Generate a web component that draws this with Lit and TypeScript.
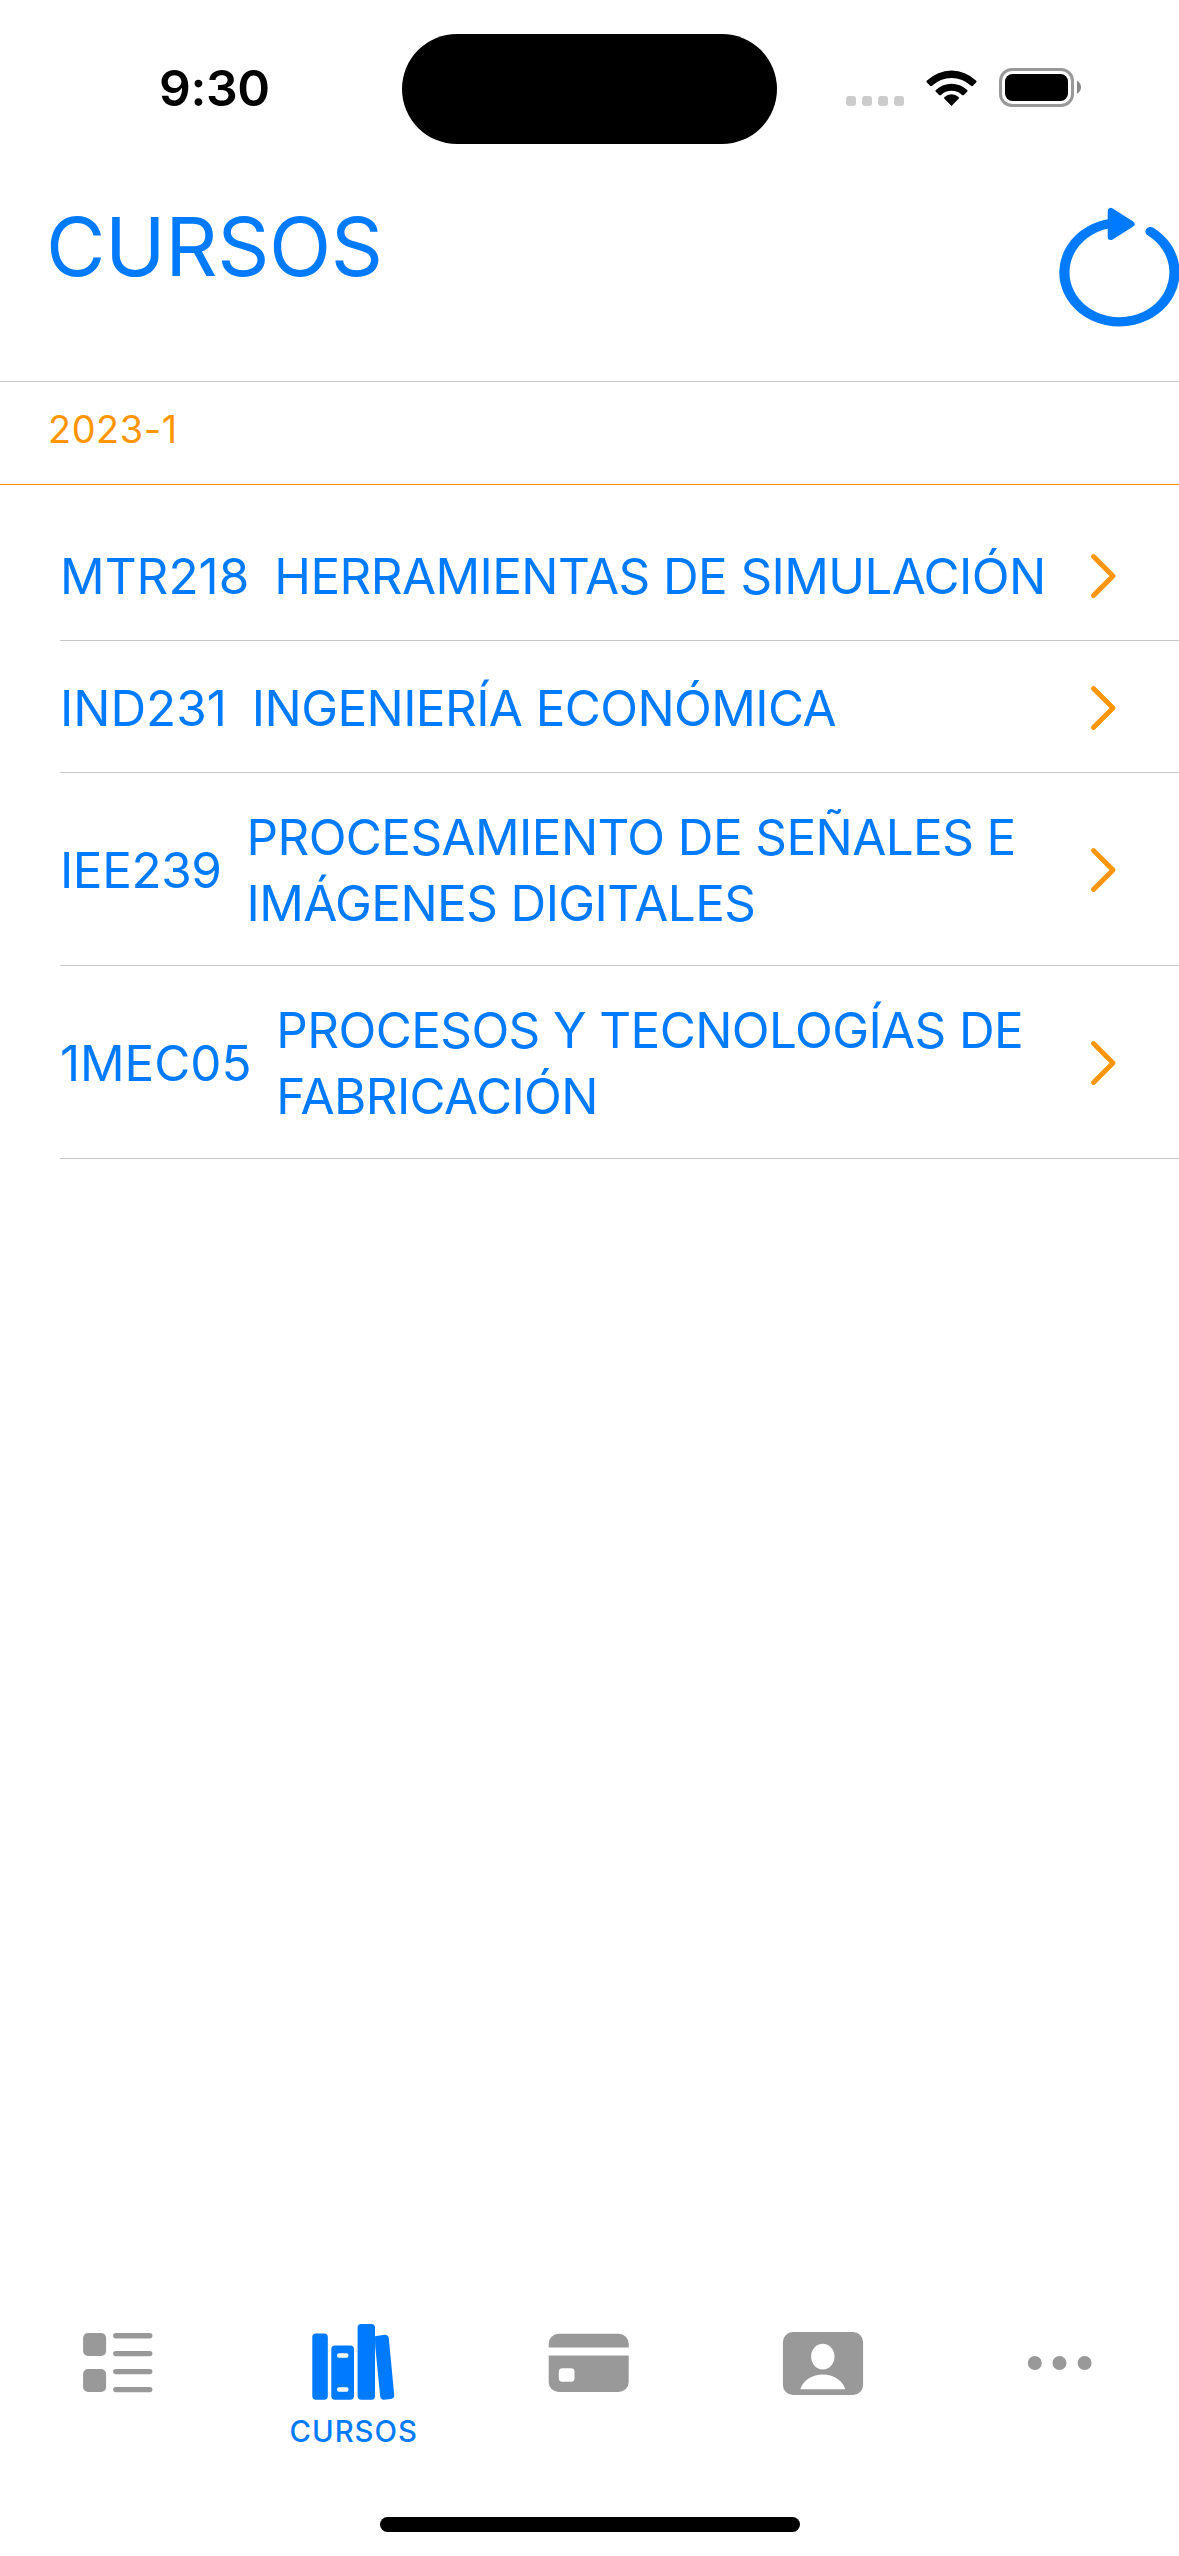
import { LitElement, html, svg, css } from "lit";
import { customElement, property } from "lit/decorators.js";

interface Course {
  code: string;
  name: string;
  /** Letter spacing of the code, in pixels. */
  tracking: number;
}

const COURSES: Course[] = [
  { code: "MTR218", name: "HERRAMIENTAS DE SIMULACIÓN", tracking: 0.05 },
  { code: "IND231", name: "INGENIERÍA ECONÓMICA", tracking: 0 },
  { code: "IEE239", name: "PROCESAMIENTO DE SEÑALES E IMÁGENES DIGITALES", tracking: -0.4 },
  { code: "1MEC05", name: "PROCESOS Y TECNOLOGÍAS DE FABRICACIÓN", tracking: -0.05 },
];

const TAB_ICONS = {
  list: svg`
    <rect x="13.1" y="17" width="23" height="23" rx="5"/>
    <rect x="13.1" y="53" width="23" height="23" rx="5"/>
    <rect x="43.1" y="17" width="39.3" height="5.4" rx="2.7"/>
    <rect x="43.1" y="35" width="39.3" height="5.2" rx="2.6"/>
    <rect x="43.1" y="53" width="39.3" height="5.2" rx="2.6"/>
    <rect x="43.1" y="71" width="39.3" height="5.2" rx="2.6"/>`,
  books: svg`
    <rect x="6.3" y="17.6" width="15.5" height="66.1" rx="3.6"/>
    <path fill-rule="evenodd" d="M29 29.6h15.3a3.7 3.7 0 0 1 3.7 3.7V80a3.7 3.7 0 0 1-3.7 3.7H29a3.7 3.7 0 0 1-3.7-3.7V33.3a3.7 3.7 0 0 1 3.7-3.7zM33.2 37.3a2.2 2.2 0 0 0 0 4.4h7.2a2.2 2.2 0 0 0 0-4.4zM33.2 71.3a2.2 2.2 0 0 0 0 4.4h7.2a2.2 2.2 0 0 0 0-4.4z"/>
    <rect x="51.6" y="8" width="17.4" height="75.7" rx="3.6"/>
    <path d="M69 20.2l9.2-1.5q4.2-.3 4.6 3.6l5.4 56.5q.3 3.8-3.4 4.2l-6.6.7q-3.6.3-4-3.4L69.2 30z"/>`,
  card: svg`
    <path d="M7.7 31.5V27.7a10 10 0 0 1 10-10h60a10 10 0 0 1 10 10v3.8z"/>
    <path fill-rule="evenodd" d="M7.7 39.5h80V66a10 10 0 0 1-10 10h-60a10 10 0 0 1-10-10zM21.3 52.3a3.5 3.5 0 0 0-3.5 3.5v6.4a3.5 3.5 0 0 0 3.5 3.5H30a3.5 3.5 0 0 0 3.5-3.5v-6.4a3.5 3.5 0 0 0-3.5-3.5z"/>`,
  person: svg`
    <path fill-rule="evenodd" d="M15.9 16h60.2a10 10 0 0 1 10 10v43a10 10 0 0 1-10 10H15.9a10 10 0 0 1-10-10V26a10 10 0 0 1 10-10zM45.8 27.8a11.7 12.8 0 0 0 0 25.6a11.7 12.8 0 0 0 0-25.6zM23.3 73.3h45a23.3 20 0 0 0-45 0z"/>`,
  more: svg`
    <circle cx="21.8" cy="47" r="7"/>
    <circle cx="46.5" cy="47" r="7"/>
    <circle cx="71.6" cy="47" r="7"/>`,
};

type TabIcon = keyof typeof TAB_ICONS;

@customElement("status-bar")
class StatusBar extends LitElement {
  static styles = css`
    :host {
      display: grid;
      grid-template-columns: 402px 375px 402px;
      height: 177px;
      box-sizing: border-box;
      padding-top: 34px;
      align-items: start;
    }
    .time {
      padding: 24px 0 0 159px;
      font-size: 49.8px;
      font-weight: 600;
      line-height: 60px;
      color: #000;
      letter-spacing: -0.4px;
    }
    .island {
      height: 110px;
      border-radius: 55px;
      background: #000;
    }
    .indicators {
      display: flex;
      padding: 34px 0 0 69px;
      height: 40px;
    }
    svg {
      display: block;
    }
  `;

  render() {
    return html`
      <div class="time">9:30</div>
      <div class="island"></div>
      <div class="indicators">
        <svg width="240" height="40" viewBox="0 0 240 40">
          <g fill="#ccc">
            <rect x="0" y="28" width="10" height="10" rx="3"/>
            <rect x="16" y="28" width="10" height="10" rx="3"/>
            <rect x="32" y="28" width="10" height="10" rx="3"/>
            <rect x="48" y="28" width="10" height="10" rx="3"/>
          </g>
          <path d="M105.5 38l-7.1-7.3c-.5-.5-.5-1.2.1-1.7a10.6 10.6 0 0 1 14 0c.6.5.6 1.2.1 1.7z"/>
          <path d="M90.1 21.8a22.7 22.7 0 0 1 30.8 0c.8.7.8 1.3.2 1.9l-3.2 3.2c-.6.6-1.2.6-1.9 0a15.3 15.3 0 0 0-21 0c-.7.6-1.3.6-1.9 0l-3.2-3.2c-.6-.6-.6-1.2.2-1.9z"/>
          <path d="M81 12.6a35 35 0 0 1 49 0c.7.7.7 1.3.1 1.9l-3.2 3.2c-.6.6-1.3.6-1.9 0a28.3 28.3 0 0 0-39 0c-.6.6-1.3.6-1.9 0l-3.2-3.2c-.6-.6-.6-1.2.1-1.9z"/>
          <rect x="154.5" y="1.5" width="72" height="36" rx="11.5" fill="none" stroke="#999" stroke-width="3"/>
          <rect x="159" y="6" width="63" height="27" rx="7.5"/>
          <path d="M231 12.8c5.3 2.4 5.3 10.6 0 13z" fill="#888"/>
        </svg>
      </div>
    `;
  }
}

@customElement("page-header")
class PageHeader extends LitElement {
  static styles = css`
    :host {
      display: flex;
      justify-content: space-between;
      align-items: flex-start;
      height: 204px;
      border-bottom: 1px solid #c8c8c8;
      color: #007aff;
    }
    .title {
      margin: 0;
      padding: 20px 0 0 46px;
      font-size: 81.4px;
      font-weight: 400;
      line-height: 100px;
      letter-spacing: -0.4px;
    }
    .refresh {
      display: block;
      margin-top: 27px;
    }
  `;

  render() {
    return html`
      <h1 class="title">CURSOS</h1>
      <svg class="refresh" width="120" height="126" viewBox="0 0 120 126">
        <g transform="translate(60 68.5) scale(1.112 1)">
          <path d="M28.3 -41A49.5 49.5 0 1 1 -6 -49.2" fill="none" stroke="currentColor" stroke-width="9.2" stroke-linecap="round"/>
        </g>
        <path d="M51.7 6.9v26.2L72.6 20z" fill="currentColor" stroke="currentColor" stroke-width="6" stroke-linejoin="round"/>
      </svg>
    `;
  }
}

@customElement("course-row")
class CourseRow extends LitElement {
  @property({ attribute: false }) course!: Course;

  static styles = css`
    :host {
      display: flex;
      align-items: center;
      box-sizing: border-box;
      min-height: 132px;
      padding: 31px 60px 29px 0;
      border-bottom: 1px solid #c8c8c8;
      color: #007aff;
      font-size: 49.4px;
      line-height: 66px;
    }
    .name {
      flex: 1;
      padding-left: 25px;
      letter-spacing: -0.58px;
    }
    .chevron {
      flex: none;
      width: 32px;
      height: 48px;
    }
  `;

  render() {
    const { code, name, tracking } = this.course;
    return html`
      <span class="code" style="letter-spacing:${tracking}px">${code}</span>
      <span class="name">${name}</span>
      <svg class="chevron" viewBox="0 0 32 48">
        <path d="M6.5 4.6L26 24L6.5 43.4" fill="none" stroke="#ff9500" stroke-width="4.9" stroke-linecap="round" stroke-linejoin="round"/>
      </svg>
    `;
  }
}

@customElement("tab-item")
class TabItem extends LitElement {
  @property() icon: TabIcon = "list";
  @property() label = "";
  @property({ type: Boolean }) active = false;

  static styles = css`
    :host {
      display: flex;
      flex-direction: column;
      align-items: center;
      color: #999;
    }
    :host([active]) {
      color: #007aff;
    }
    svg {
      display: block;
      width: 96px;
      height: 96px;
      fill: currentColor;
    }
    .label {
      font-size: 29.3px;
      font-weight: 450;
      line-height: 36px;
      padding-top: 2px;
      letter-spacing: 1px;
    }
  `;

  render() {
    return html`
      <svg viewBox="0 0 96 96">${TAB_ICONS[this.icon]}</svg>
      ${this.label ? html`<span class="label">${this.label}</span>` : null}
    `;
  }
}

@customElement("app-root")
class AppRoot extends LitElement {
  static styles = css`
    :host {
      display: flex;
      flex-direction: column;
      width: 1179px;
      height: 2556px;
      overflow: hidden;
      background: #fff;
      font-family: Inter, "Liberation Sans", sans-serif;
    }
    .term {
      box-sizing: border-box;
      height: 103px;
      padding: 22px 0 0 48px;
      border-bottom: 1px solid #ff9500;
      color: #ff9500;
      font-size: 37.8px;
      line-height: 50px;
      letter-spacing: 0.6px;
    }
    .courses {
      flex: 1;
      padding: 24px 0 0 60px;
    }
    .tabs {
      display: grid;
      grid-template-columns: repeat(5, 1fr);
      height: 201px;
    }
    .home {
      width: 420px;
      height: 15px;
      margin: 0 auto 24px;
      border-radius: 8px;
      background: #000;
    }
  `;

  render() {
    return html`
      <status-bar></status-bar>
      <page-header></page-header>
      <div class="term">2023-1</div>
      <div class="courses">
        ${COURSES.map((c) => html`<course-row .course=${c}></course-row>`)}
      </div>
      <nav class="tabs">
        <tab-item icon="list"></tab-item>
        <tab-item icon="books" label="CURSOS" active></tab-item>
        <tab-item icon="card"></tab-item>
        <tab-item icon="person"></tab-item>
        <tab-item icon="more"></tab-item>
      </nav>
      <div class="home"></div>
    `;
  }
}
